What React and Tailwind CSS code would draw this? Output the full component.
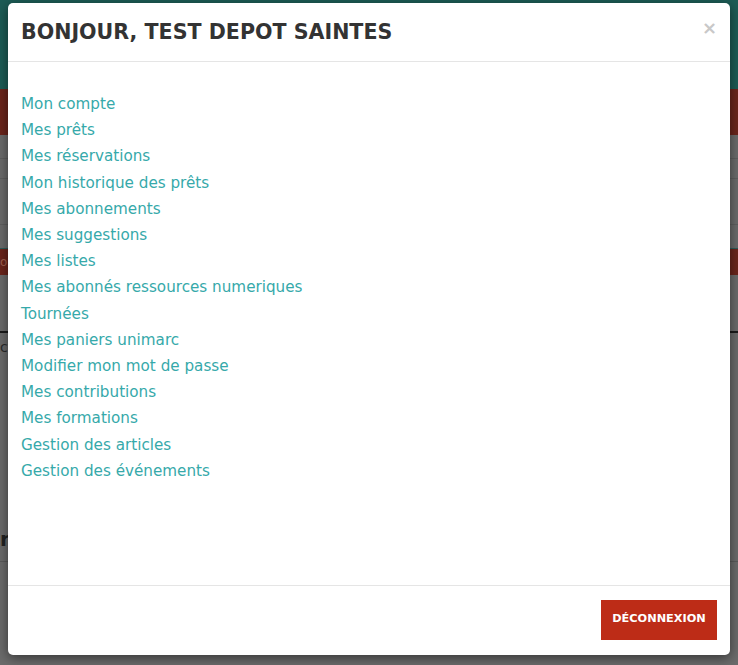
const links = [
  "Mon compte",
  "Mes prêts",
  "Mes réservations",
  "Mon historique des prêts",
  "Mes abonnements",
  "Mes suggestions",
  "Mes listes",
  "Mes abonnés ressources numeriques",
  "Tournées",
  "Mes paniers unimarc",
  "Modifier mon mot de passe",
  "Mes contributions",
  "Mes formations",
  "Gestion des articles",
  "Gestion des événements",
];

function Background() {
  return (
    <div className="h-[665px] bg-[#6b6b6b] flex flex-col">
      <div className="h-[89px] bg-[#1d5c55]"></div>
      <div className="h-[46px] bg-[#6a241b]"></div>
      <div className="h-[24px] border-b border-[#5f5f5f]"></div>
      <div className="h-[20px] border-b border-[#5f5f5f]"></div>
      <div className="h-[46px] border-b border-[#5f5f5f]"></div>
      <div className="h-[24px] border-b border-[#2e5c5a]"></div>
      <div className="h-[26px] bg-[#6a241b] text-[#a0604f] text-xs flex items-center">ou</div>
      <div className="h-[58px] border-b-2 border-[#1a1a1a]"></div>
      <div className="h-[28px] text-[#2a2a2a] text-sm pt-1 font-['DejaVu_Sans',sans-serif]">ct</div>
      <div className="h-[200px] flex items-end text-[#222] text-xl font-bold pb-2 font-['DejaVu_Sans',sans-serif]">r</div>
      <div className="border-t border-[#5a5a5a]"></div>
    </div>
  );
}

export default function App() {
  return (
    <div className="relative w-[738px] h-[665px] overflow-hidden font-['DejaVu_Sans',sans-serif]">
      <Background />
      <div className="absolute left-[8px] top-[3px] w-[722px] h-[652px] bg-white rounded-[5px] shadow-[0_3px_12px_rgba(0,0,0,0.5)] flex flex-col">
        <div className="h-[59px] border-b border-[#e5e5e5] flex items-center justify-between pl-[13px] pr-[13px]">
          <h4 className="text-[20.6px] font-bold text-[#333333]">BONJOUR, TEST DEPOT SAINTES</h4>
          <button className="text-[#c8c8c8] text-[18px] font-bold leading-none -mt-[9px]">×</button>
        </div>
        <div className="flex-1 pl-[13px] pt-[29px] flex flex-col">
          {links.map((l) => (
            <a key={l} href="#" className="text-[#36a9aa] text-[15.2px] leading-[26.2px] w-fit">
              {l}
            </a>
          ))}
        </div>
        <div className="h-[70px] border-t border-[#e5e5e5] flex items-center justify-end pr-[13px] pb-[2px]">
          <button className="bg-[#bd2c17] text-white text-[11.3px] font-bold w-[116px] h-[40px]">DÉCONNEXION</button>
        </div>
      </div>
    </div>
  );
}
